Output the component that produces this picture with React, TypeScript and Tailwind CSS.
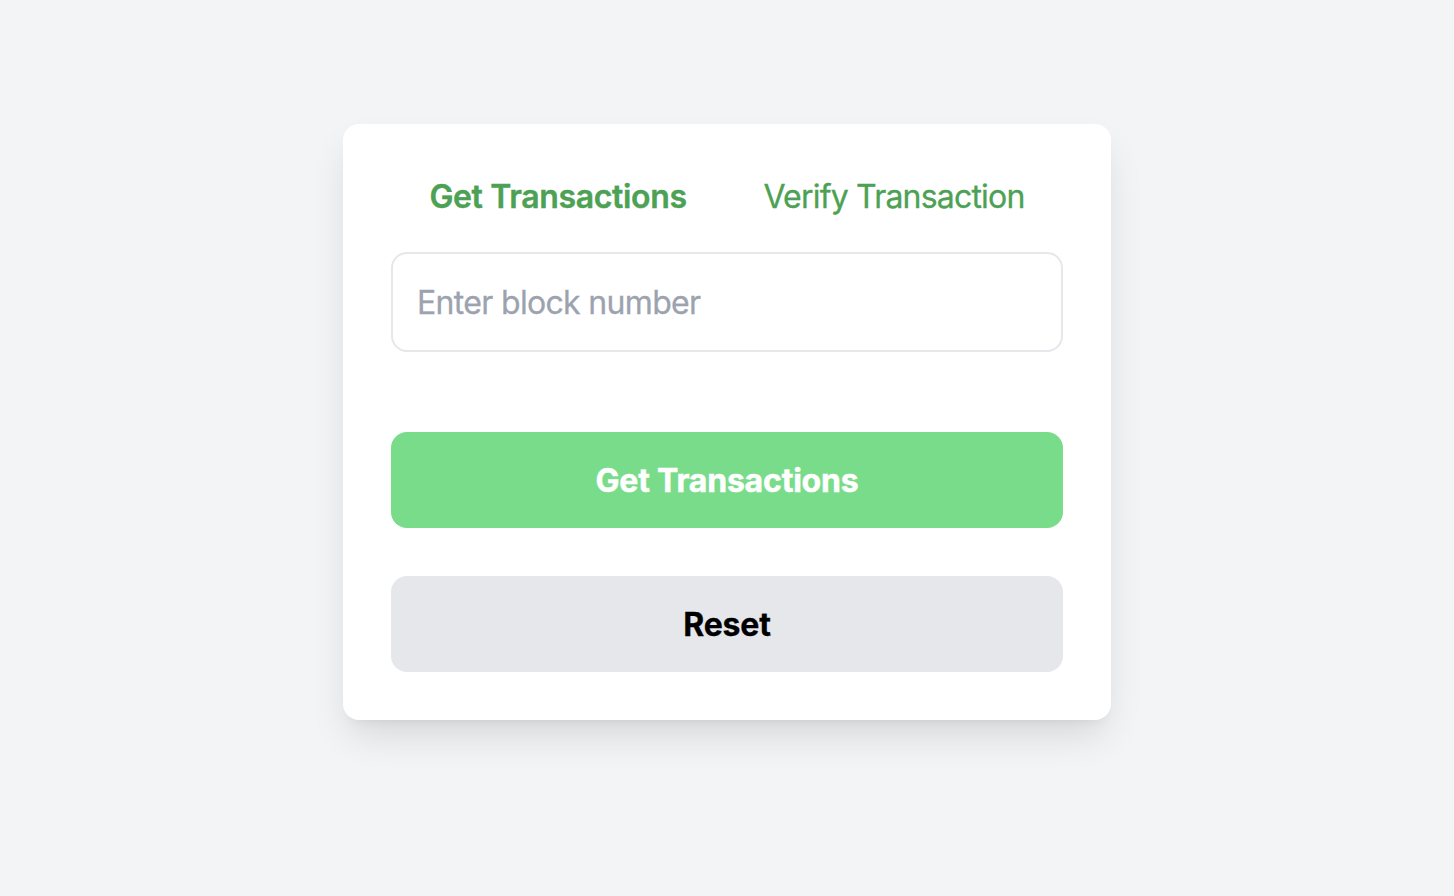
export default function App() {
  return (
    <div className="flex min-h-screen justify-center bg-[#f3f4f6] pt-[124px] font-[Inter,sans-serif] text-[32px] leading-[48px]">
      <main className="flex h-[596px] w-[768px] flex-col rounded-2xl bg-white p-12 shadow-[0_20px_38px_-6px_rgba(0,0,0,0.12),0_8px_12px_-8px_rgba(0,0,0,0.08)]">
        <nav className="flex h-12 text-[#4ca154]">
          <button className="w-[334px] whitespace-nowrap pt-px font-semibold tracking-[-0.35px] [-webkit-text-stroke:0.4px]">Get Transactions</button>
          <button className="w-[338px] whitespace-nowrap pt-px tracking-[-0.8px] [-webkit-text-stroke:0.3px]">Verify Transaction</button>
        </nav>
        <input
          aria-label="Block number"
          placeholder="Enter block number"
          className="mt-8 h-[100px] w-full rounded-2xl border-2 border-[#e5e7eb] px-6 pt-px tracking-[-0.67px] outline-none [-webkit-text-stroke:0.3px] placeholder:text-[#9ca3af]"
        />
        <button className="mt-20 h-24 rounded-2xl bg-[#79dc8a] pt-[2px] font-bold tracking-[-0.2px] text-white [-webkit-text-stroke:0.5px]">Get Transactions</button>
        <button className="mt-12 h-24 rounded-2xl bg-[#e5e7eb] pt-[2px] font-bold tracking-[-0.2px] text-black [-webkit-text-stroke:0.3px]">Reset</button>
      </main>
    </div>
  );
}
